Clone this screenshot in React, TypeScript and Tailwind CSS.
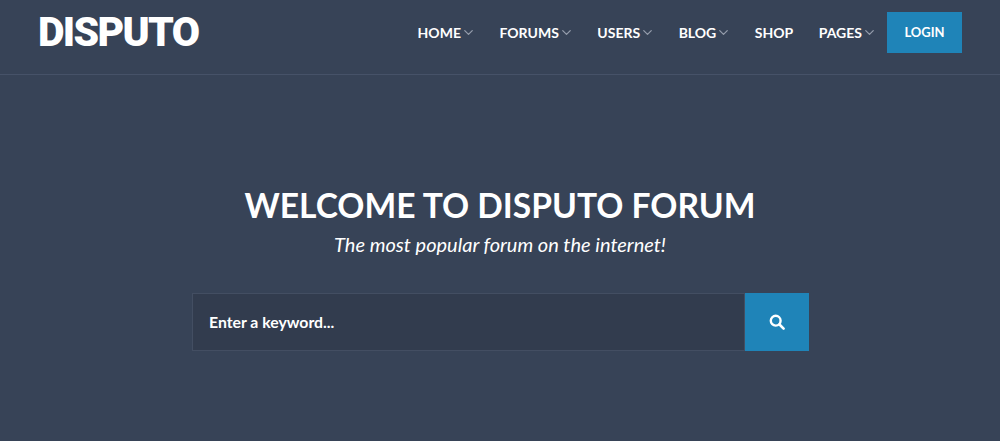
import { ChevronDown } from 'lucide-react';

const links = [
  { label: 'HOME', caret: true },
  { label: 'FORUMS', caret: true },
  { label: 'USERS', caret: true },
  { label: 'BLOG', caret: true },
  { label: 'SHOP', caret: false },
  { label: 'PAGES', caret: true },
];

const App = () => {
  return (
    <div className="h-[441px] w-[1000px] overflow-hidden bg-[#374357] font-['Lato',sans-serif] text-white">
      <header className="flex h-[75px] items-start justify-between border-b border-[#465268] pl-[38px] pr-[38px]">
        <div className="mt-[10px] font-['Roboto',sans-serif] text-[41px] leading-[44px] font-black tracking-[-1.7px]">DISPUTO</div>
        <nav className="mt-[12px] flex items-center">
          <ul className="flex items-center gap-[25.5px] pr-[12px]">
            {links.map((link) => (
              <li key={link.label} className="flex items-center text-[14px] leading-[40px] font-bold">
                {link.label}
                {link.caret && <ChevronDown size={15} strokeWidth={2} className="-mr-[2px] text-[#949cab]" />}
              </li>
            ))}
          </ul>
          <a className="flex h-[41px] w-[75px] items-center justify-center bg-[#1f84b8] text-[13px] font-bold">LOGIN</a>
        </nav>
      </header>

      <section className="flex flex-col items-center pt-[107px]">
        <h1 className="text-[33.6px] leading-[46px] font-bold">WELCOME TO DISPUTO FORUM</h1>
        <p className="mt-[3px] text-[20px] leading-[26px] italic">The most popular forum on the internet!</p>
        <form className="mt-[36px] ml-[1px] flex h-[58px] w-[617px]">
          <div className="flex flex-1 items-center border border-[#434e62] bg-[#323c4e] pl-[16px] text-[15.8px] font-bold">
            Enter a keyword...
          </div>
          <button className="flex w-[64px] items-center justify-center bg-[#1f84b8]">
            <svg width="16" height="16" viewBox="0 0 16 16" fill="none" stroke="white">
              <circle cx="6.7" cy="6.7" r="4.9" strokeWidth="2.4" />
              <path d="M10.5 10.5 14.6 14.6" strokeWidth="2.6" strokeLinecap="round" />
            </svg>
          </button>
        </form>
      </section>
    </div>
  );
};

export default App;
